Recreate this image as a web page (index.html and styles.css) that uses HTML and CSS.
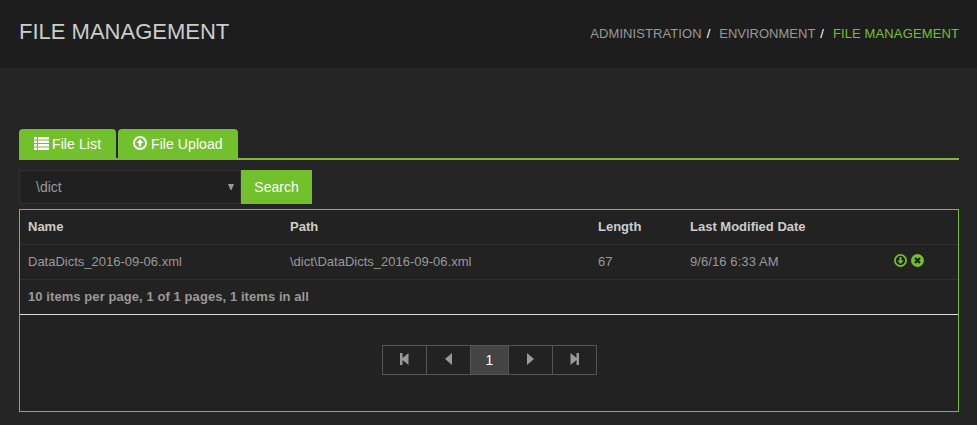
FILE: index.html
```html
<!DOCTYPE html>
<html lang="en">
<head>
<meta charset="utf-8">
<title>File Management</title>
<link rel="stylesheet" href="styles.css">
</head>
<body>
<header class="page-header">
  <h1>FILE MANAGEMENT</h1>
  <nav class="breadcrumb"><a class="first">ADMINISTRATION</a><span class="sep">/</span><a>ENVIRONMENT</a><span class="sep">/</span><a class="current">FILE MANAGEMENT</a></nav>
</header>
<main>
  <div class="tabs">
    <a class="tab list"><svg class="icon-list" width="15" height="13" viewBox="0 0 15 13"><path fill="currentColor" d="M0 0h3v2.500H0zM4 0h11v2.500H4zM0 3.500h3V6H0zM4 3.500h11V6H4zM0 7h3v2.500H0zM4 7h11v2.500H4zM0 10.500h3V13H0zM4 10.500h11V13H4z"/></svg><span>File List</span></a>
    <a class="tab upload"><svg class="icon-upload" width="14" height="14" viewBox="0 0 14 14"><circle cx="7" cy="7" r="6" fill="none" stroke="currentColor" stroke-width="1.900"/><path fill="currentColor" d="M7 3l3.600 4H8.200v3.500H5.800V7H3.400z"/></svg><span>File Upload</span></a>
  </div>
  <div class="search">
    <div class="select"><span>\dict</span><svg width="6" height="6" viewBox="0 0 6 6"><path fill="currentColor" d="M0 0h6L3.500 6h-1z"/></svg></div>
    <button class="btn">Search</button>
  </div>
  <section class="panel">
    <div class="row head"><span>Name</span><span>Path</span><span>Length</span><span>Last Modified Date</span><span></span></div>
    <div class="row"><span>DataDicts_2016-09-06.xml</span><span>\dict\DataDicts_2016-09-06.xml</span><span>67</span><span class="date">9/6/16 6:33 AM</span>
      <span class="actions"><svg width="13" height="13" viewBox="0 0 13 13"><circle cx="6.500" cy="6.500" r="5.600" fill="none" stroke="currentColor" stroke-width="1.800"/><path fill="currentColor" d="M5.500 3h2v3.500h2.200L6.500 10 3.300 6.500h2.200z"/></svg><svg width="13" height="13" viewBox="0 0 13 13"><circle cx="6.500" cy="6.500" r="6.500" fill="currentColor"/><path stroke="#222" stroke-width="2.300" d="M4 4l5 5M9 4L4 9"/></svg></span></div>
    <div class="summary">10 items per page, 1 of 1 pages, 1 items in all</div>
    <div class="pager">
      <a><svg width="9" height="12" viewBox="0 0 9 12"><path fill="currentColor" d="M0 0h2.500v5L8.500 0v12L2.500 7v5H0z"/></svg></a>
      <a><svg width="7" height="12" viewBox="0 0 7 12"><path fill="currentColor" d="M7 0v12L0 6z"/></svg></a>
      <a class="active">1</a>
      <a><svg width="7" height="12" viewBox="0 0 7 12"><path fill="currentColor" d="M0 0v12l7-6z"/></svg></a>
      <a><svg width="9" height="12" viewBox="0 0 9 12"><path fill="currentColor" d="M9 0H6.500v5L0.500 0v12L6.500 7v5H9z"/></svg></a>
    </div>
  </section>
</main>
</body>
</html>
```
FILE: styles.css
```css
* { box-sizing: border-box; }
body {
  margin: 0;
  height: 425px;
  overflow: hidden;
  background: #252525;
  color: #999;
  font: 13px/20px "Liberation Sans", Arial, sans-serif;
}
svg { display: block; flex: none; }
.page-header {
  height: 68px;
  padding: 0 18px 0 19px;
  display: flex;
  justify-content: space-between;
  background: #1d1d1d;
}
h1 {
  margin: 20px 0 0;
  font-size: 22px;
  line-height: 24px;
  font-weight: 400;
  color: #ccc;
}
.breadcrumb { padding-top: 24px; white-space: nowrap; }
.sep { color: #fff; margin: 0 9px 0 5px; }
.first { letter-spacing: 0.080px; }
.current { color: #72c02c; letter-spacing: 0.120px; }
main { padding: 61px 18px 0 19px; }
.tabs {
  display: flex;
  gap: 2px;
  height: 31px;
  border-bottom: 2px solid #72c02c;
}
.tab {
  display: flex;
  height: 31px;
  padding: 0 0 0 15px;
  gap: 4px;
  border-radius: 4px 4px 0 0;
  background: #72c02c;
  color: #fff;
  font-size: 14px;
  line-height: 30px;
}
.list { width: 97px; gap: 3px; letter-spacing: 0.100px; }
.upload { width: 120px; letter-spacing: 0.080px; }
.icon-list { margin-top: 8px; }
.icon-upload { margin-top: 7px; }
.search { display: flex; margin-top: 10px; height: 34px; }
.select {
  width: 222px;
  display: flex;
  align-items: center;
  justify-content: space-between;
  padding: 0 6px 0 16px;
  border: 1px solid #303030;
  background: #202020;
  font-size: 14px;
}
.btn {
  width: 71px;
  padding: 0;
  border: 0;
  background: #72c02c;
  color: #fff;
  font: 14px "Liberation Sans", Arial, sans-serif;
}
.panel {
  height: 203px;
  margin-top: 5px;
  border: 1px solid #72c02c;
  background: #222;
}
.row {
  display: grid;
  grid-template-columns: 262px 308px 92px 204px 1fr;
  height: 35px;
  padding-left: 8px;
  border-bottom: 1px solid #303030;
  line-height: 33px;
}
.head { font-weight: 700; color: #ccc; }
.date { letter-spacing: 0.080px; }
.actions { display: flex; gap: 4px; padding-top: 9px; color: #72c02c; }
.summary {
  height: 35px;
  padding-left: 8px;
  border-bottom: 1px solid #ddd;
  font-weight: 700;
  line-height: 33px;
  letter-spacing: 0.075px;
}
.pager { display: flex; justify-content: center; margin-top: 30px; }
.pager a {
  display: flex;
  align-items: center;
  justify-content: center;
  width: 45px;
  height: 30px;
  margin-right: -1px;
  padding-bottom: 2px;
  border: 1px solid #555;
}
.pager .active {
  position: relative;
  width: 39px;
  padding-bottom: 0;
  background: #444;
  color: #fff;
  font-size: 14px;
}
```
